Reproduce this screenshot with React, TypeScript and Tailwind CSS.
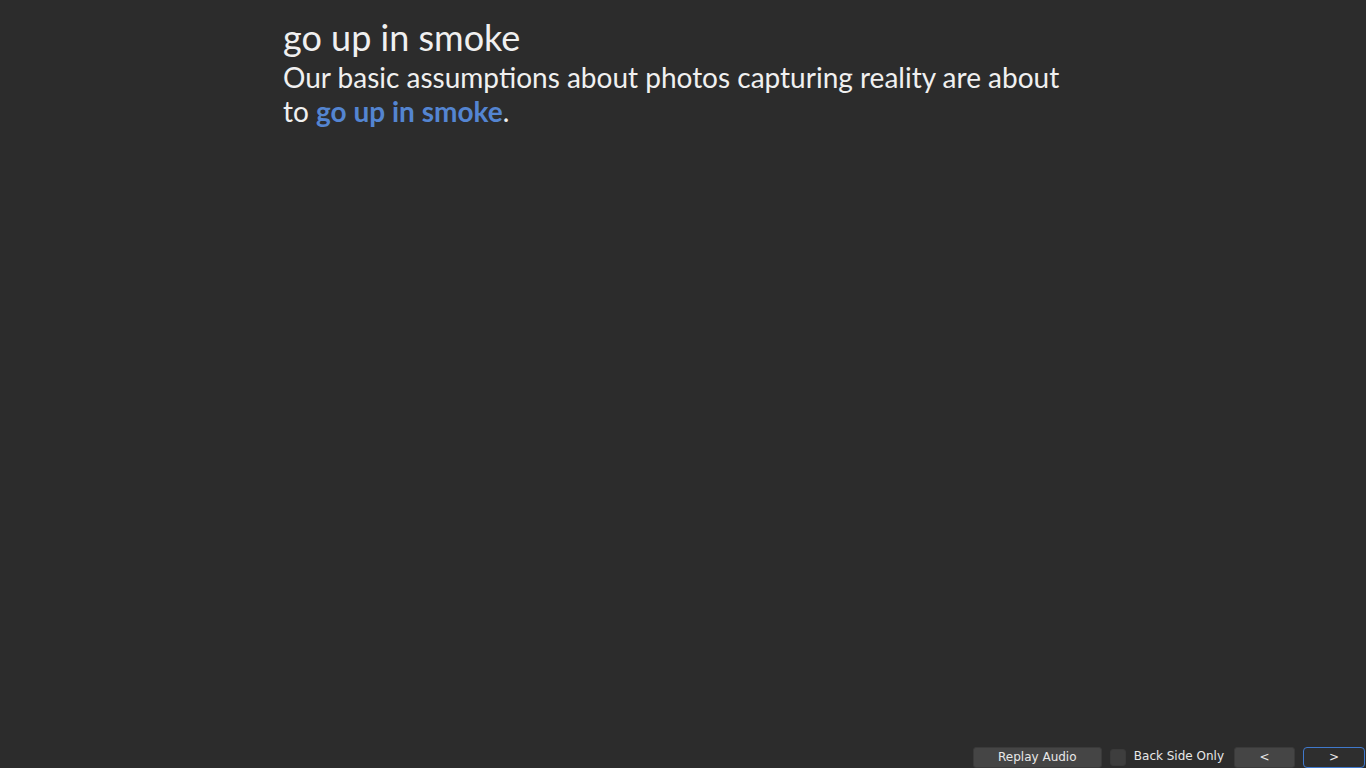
import React from 'react'

export default function App() {
  return (
    <div className="flex h-screen flex-col bg-[#2c2c2c] text-[#f0f0f0]">
      <div className="flex-1 overflow-hidden">
        <div className="mx-auto w-[800px] pt-[14px] font-['Lato',sans-serif]">
          <div className="text-[36px] leading-[46px]">go up in smoke</div>
          <div className="text-[28px] leading-[34px]">
            Our basic assumptions about photos capturing reality are about to{' '}
            <span className="font-bold text-[#5485d1]">go up in smoke</span>.
          </div>
        </div>
      </div>

      <div className="flex items-center justify-end pr-[1px] font-['DejaVu_Sans',sans-serif] text-[12px] text-[#e8e8e8]">
        <button className="h-[21px] w-[129px] rounded-[3px] border border-[#3a3a3a] bg-[#454545] pb-[1px] text-center">
          Replay Audio
        </button>
        <label className="ml-[8px] flex items-center gap-[8px]">
          <span className="h-[17px] w-[16px] rounded-[3px] border border-[#3a3a3a] bg-[#3e3e3e]" />
          <span className="pb-[3px]">Back Side Only</span>
        </label>
        <button className="ml-[10px] h-[21px] w-[61px] rounded-[3px] border border-[#3a3a3a] bg-[#454545] pb-[1px]">
          &lt;
        </button>
        <button className="ml-[8px] h-[21px] w-[62px] rounded-[4px] border border-[#4079cc] bg-[#2e2e2e] pb-[1px]">
          &gt;
        </button>
      </div>
    </div>
  )
}
